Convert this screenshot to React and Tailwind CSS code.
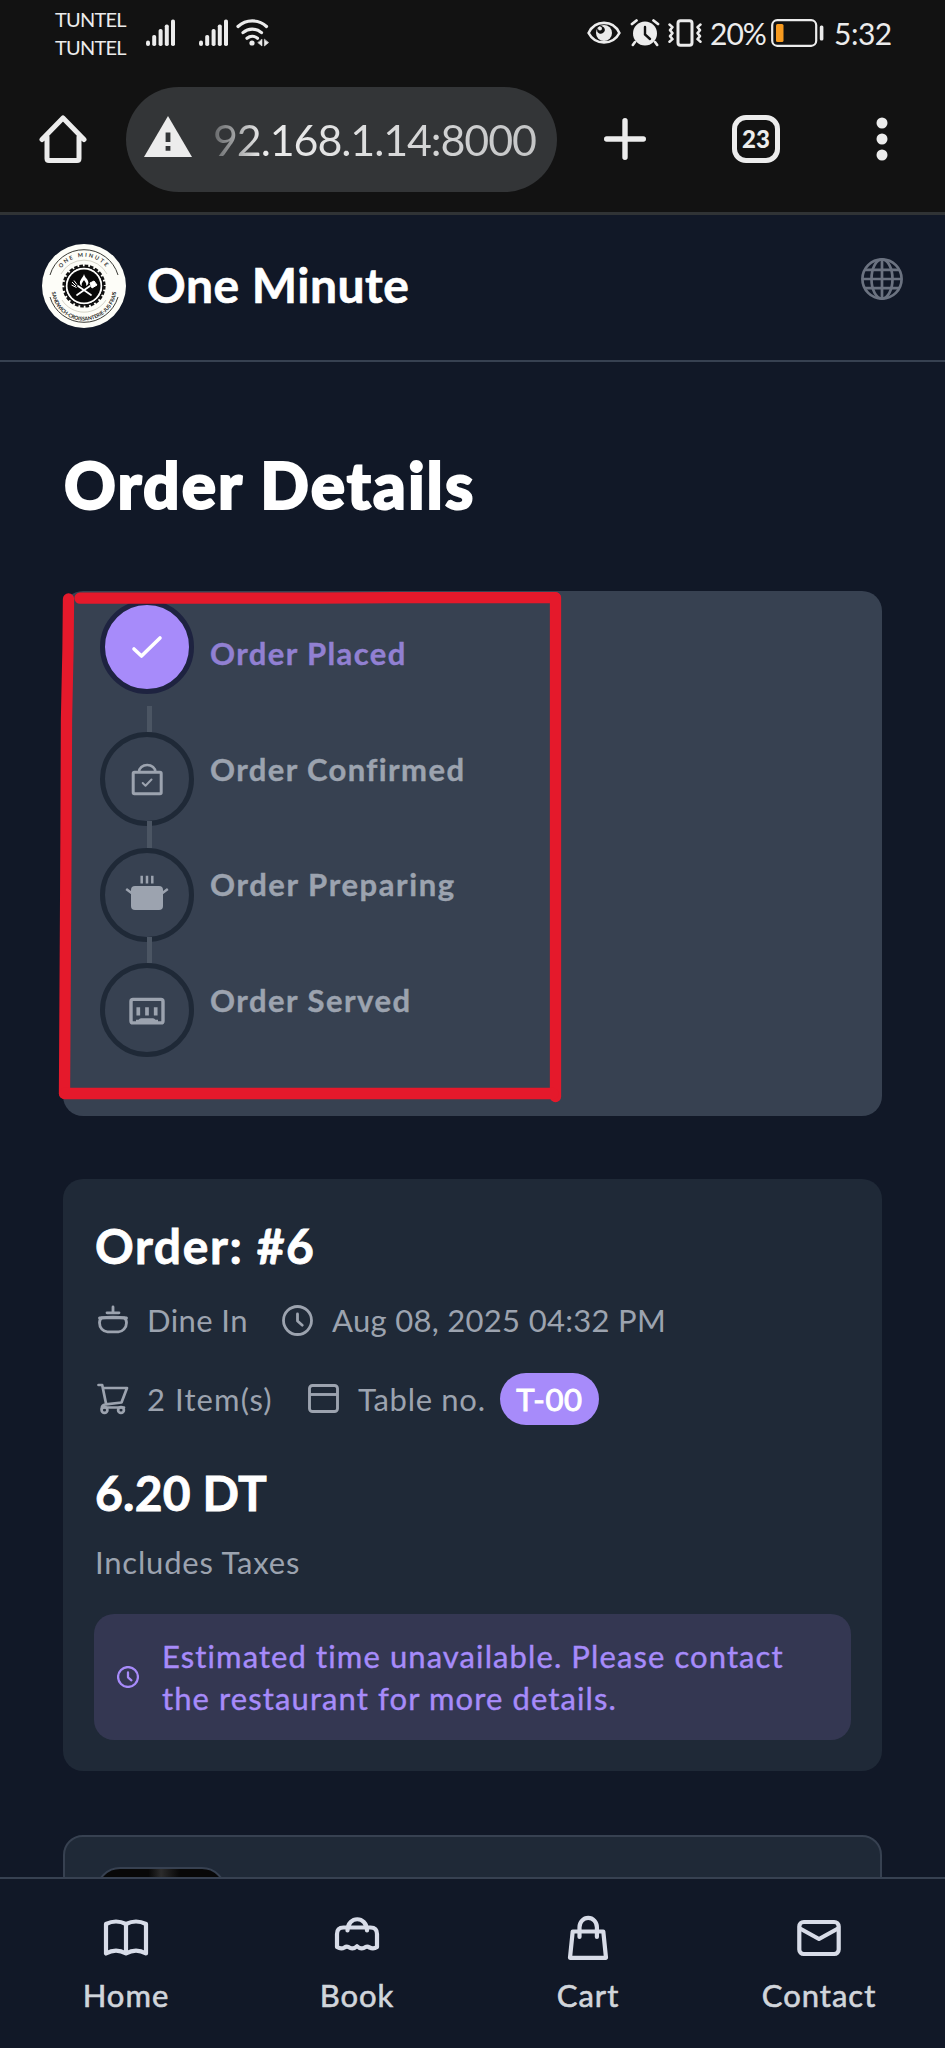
import React from "react";

function Signal() {
  return (
    <svg width="30" height="28" viewBox="0 0 30 28" fill="#ececec">
      <rect x="0" y="21.5" width="4" height="5.5" rx="2" />
      <rect x="6.2" y="16" width="4" height="11" rx="1.8" />
      <rect x="12.6" y="10" width="4" height="17" rx="1.8" />
      <rect x="18.8" y="5.5" width="4" height="21.5" rx="1.8" />
      <rect x="25" y="0.5" width="4" height="26.5" rx="1.8" />
    </svg>
  );
}

function Wifi() {
  return (
    <svg width="34" height="28" viewBox="0 0 34 28" fill="none" stroke="#ececec" strokeWidth="3.2" strokeLinecap="round">
      <path d="M2 7.5a21 21 0 0 1 28.5 0M7 13.6a14 14 0 0 1 18.5 0M11 19.2a8.5 8.5 0 0 1 10.5 0" />
      <circle cx="16" cy="24" r="2.6" fill="#ececec" stroke="none" />
      <path d="M26 20.5v6.5l-4-3.2zM28.4 20.5v6.5l4-3.2z" fill="#ececec" stroke="#ececec" strokeWidth="0.6" />
    </svg>
  );
}

function Eye() {
  return (
    <svg width="34" height="26" viewBox="0 0 34 26" fill="none">
      <path d="M1.6 13C8 -0.5 26 -0.5 32.4 13C26 25.5 8 25.5 1.6 13Z" stroke="#ececec" strokeWidth="2.6" />
      <circle cx="17" cy="13" r="8" fill="#ececec" />
      <path d="M10 9.5a3.8 3.8 0 0 0 6 3.5a4 4 0 0 0 1-5.5l-3-2z" fill="#121212" />
      <circle cx="13" cy="8.5" r="2" fill="#ececec" />
    </svg>
  );
}

function Alarm() {
  return (
    <svg width="30" height="28" viewBox="0 0 30 28" fill="none" strokeLinecap="round">
      <circle cx="15" cy="14.5" r="12" fill="#ececec" />
      <path d="M2 5L6.5 1.5M28 5l-4.5-3.5" stroke="#ececec" strokeWidth="2.8" />
      <path d="M5 23l-2.2 3M25 23l2.2 3" stroke="#ececec" strokeWidth="2.6" />
      <path d="M15 8v7.5l5 4.5" stroke="#121212" strokeWidth="2.4" />
    </svg>
  );
}

function Vibrate() {
  return (
    <svg width="34" height="28" viewBox="0 0 34 28" fill="none" stroke="#ececec" strokeLinecap="round" strokeLinejoin="round">
      <rect x="10" y="1.7" width="14" height="24.6" rx="2.5" strokeWidth="3" />
      <path d="M1.5 5.5l3 2.6-2.5 3 2.5 3-2.5 3 2.5 3-3 2.6M32.5 5.5l-3 2.6 2.5 3-2.5 3 2.5 3-2.5 3 3 2.6" strokeWidth="2.5" />
    </svg>
  );
}

function Battery() {
  return (
    <svg width="54" height="28" viewBox="0 0 54 28" fill="none">
      <rect x="1.2" y="1.2" width="44" height="25.6" rx="5" stroke="#ececec" strokeWidth="2.2" />
      <rect x="5" y="5" width="7.5" height="18" rx="1.5" fill="#f79a1f" />
      <rect x="48.8" y="6.5" width="3.6" height="15" rx="1.5" fill="#ececec" />
    </svg>
  );
}

function StatusBar() {
  return (
    <div className="flex h-[66px] items-center pl-[55px] text-[#ececec]">
      <div className="w-[91px] whitespace-nowrap text-[20px] leading-[28px] tracking-[-0.8px]">
        <div>TUNTEL</div>
        <div>TUNTEL</div>
      </div>
      <div className="w-[53px]"><Signal /></div>
      <div className="w-[37px]"><Signal /></div>
      <div className="w-[351px]"><Wifi /></div>
      <div className="w-[43px]"><Eye /></div>
      <div className="w-[38px]"><Alarm /></div>
      <div className="w-[42px]"><Vibrate /></div>
      <div className="w-[61px] whitespace-nowrap text-[30px] leading-[40px] tracking-[-1px]">20%</div>
      <div className="w-[63px]"><Battery /></div>
      <div className="whitespace-nowrap text-[30px] leading-[40px] tracking-[-0.5px]">5:32</div>
    </div>
  );
}

function BrowserBar() {
  return (
    <div className="flex h-[146px] items-center pl-[39px]">
      <svg className="mr-[39px]" width="48" height="50" viewBox="0 0 48 50" fill="none" stroke="#ececec" strokeWidth="5" strokeLinejoin="round" strokeLinecap="round">
        <path d="M3 25.5L24 4l21 21.5M8 23v21.5q0 2 2 2h28q2 0 2-2V23" />
      </svg>
      <div className="flex h-[105px] w-[431px] items-center rounded-full bg-[#333537] pl-[18px]">
        <svg className="mb-[6px] mr-[21px]" width="48" height="42" viewBox="0 0 48 42">
          <path d="M24 1L48 42H0Z" fill="#ececec" />
          <path d="M21.6 17.5h4.8v9.5h-4.8zM21.6 31h4.8v4.8h-4.8z" fill="#333537" />
        </svg>
        <span className="whitespace-nowrap bg-linear-to-r from-[#66686a] via-[#ececec] via-15% to-[#c4c5c6] bg-clip-text pt-[1px] text-[43px] leading-[60px] tracking-[-1.1px] text-transparent">
          92.168.1.14:8000
        </span>
      </div>
      <svg className="ml-[47px]" width="42" height="42" viewBox="0 0 42 42" stroke="#ececec" strokeWidth="5.4" strokeLinecap="round">
        <path d="M21 2.7v36.6M2.7 21h36.6" />
      </svg>
      <div className="ml-[86px] flex size-[48px] items-center justify-center rounded-[14px] border-[5px] border-[#ececec] text-[24px] font-black leading-none text-[#ececec]">
        23
      </div>
      <svg className="ml-[96px]" width="12" height="44" viewBox="0 0 12 44" fill="#ececec">
        <circle cx="6" cy="6" r="5.5" />
        <circle cx="6" cy="22" r="5.5" />
        <circle cx="6" cy="38" r="5.5" />
      </svg>
    </div>
  );
}

function Logo() {
  return (
    <svg width="84" height="84" viewBox="0 0 84 84" fill="none">
      <defs>
        <path id="arcTop" d="M14 36A28.5 28.5 0 0 1 70 36" />
        <path id="arcBottom" d="M9.5 44A32.5 32.5 0 0 0 74.5 44" />
      </defs>
      <circle cx="42" cy="42" r="42" fill="#fdfdf8" />
      <path d="M8 31A35.5 35.5 0 0 1 76 31M8 53A35.5 35.5 0 0 0 76 53" stroke="#3a3a35" strokeWidth="1" />
      <path d="M19 30A26 26 0 0 1 65 30M20 56A26 26 0 0 0 64 56" stroke="#b9b7a8" strokeWidth="0.6" />
      <circle cx="42" cy="42" r="20.3" stroke="#111" strokeWidth="2.6" strokeDasharray="3.6 1.715" />
      <circle cx="42" cy="42" r="19" stroke="#111" strokeWidth="1.6" />
      <circle cx="42" cy="42" r="17.5" stroke="#fff" strokeWidth="1.2" />
      <circle cx="42" cy="42" r="16.5" fill="#080808" />
      <path d="M42 30c-1 4-5 6-4 10 1 2 2 2 2 2-1-3 1-4 2-6 1 2 3 3 2 6 2-1 3-3 2-5-1-3-3-3-4-7z" fill="#fff" />
      <path d="M35 51l13-9M49 51l-13-9" stroke="#fff" strokeWidth="1.7" strokeLinecap="round" />
      <path d="M48 39l4-2 3 4-5 3zM30 38l4 4M32 36.5l3 4M29.5 41l5 2.5" fill="#fff" stroke="#fff" strokeWidth="1" />
      <text fontSize="5.5" fontWeight="700" fill="#333" letterSpacing="1.8">
        <textPath href="#arcTop" startOffset="50%" textAnchor="middle">ONE MINUTE</textPath>
      </text>
      <text fontSize="5.2" fontWeight="700" fill="#222" textLength="94">
        <textPath href="#arcBottom" startOffset="4%" textLength="94">SANDWICH-CROISSANTERIE-JUS FRAIS</textPath>
      </text>
    </svg>
  );
}

function Globe() {
  return (
    <svg width="42" height="42" viewBox="0 0 42 42" fill="none" stroke="#6b7280" strokeWidth="2.7">
      <circle cx="21" cy="21" r="19.6" />
      <ellipse cx="21" cy="21" rx="10.5" ry="19.6" />
      <path d="M21 1.5v39M1.5 21h39M4 11.8h34M4 30.2h34" />
    </svg>
  );
}

function AppHeader() {
  return (
    <header className="flex h-[147px] items-start justify-between border-b-2 border-[#374151] pl-[42px] pr-[42px] pt-[29px]">
      <div className="flex items-center">
        <Logo />
        <span className="ml-[21px] whitespace-nowrap pb-[2px] text-[48px] font-bold leading-[60px] tracking-[0.5px] [-webkit-text-stroke:0.6px]">One Minute</span>
      </div>
      <div className="pt-[14px]"><Globe /></div>
    </header>
  );
}

const stepIcons = {
  check: (
    <svg width="48" height="48" viewBox="0 0 48 48" fill="none" stroke="#fff" strokeWidth="3.6" strokeLinecap="round" strokeLinejoin="round">
      <path d="M11 26l7.5 7L37 15" />
    </svg>
  ),
  bag: (
    <svg width="48" height="48" viewBox="0 0 48 48" fill="none" stroke="#9ca3af" strokeWidth="3" strokeLinejoin="round">
      <rect x="10.2" y="17.2" width="28" height="21.5" rx="1.2" />
      <path d="M16 17a8.2 7 0 0 1 16.4 0" strokeWidth="2.6" />
      <path d="M19.7 28l2.8 2.7L28.5 24.5" strokeWidth="2" strokeLinecap="round" />
    </svg>
  ),
  pot: (
    <svg width="48" height="48" viewBox="0 0 48 48" fill="none" stroke="#9ca3af" strokeWidth="2.5">
      <rect x="8" y="15" width="32" height="24" rx="4" fill="#9ca3af" stroke="none" />
      <path d="M18.7 4.7v7.8M24 4.7v7.8M29.3 4.7v7.8M3.2 18l6 4.5M44.8 18l-6 4.5" />
    </svg>
  ),
  served: (
    <svg width="48" height="48" viewBox="0 0 48 48" fill="none" stroke="#9ca3af" strokeWidth="3.4">
      <rect x="8" y="13.4" width="32" height="23.5" rx="2" />
      <path d="M15.3 21.2v8.3M24 21.2v8.3M32.7 21.2v8.3" strokeWidth="3.7" />
      <path d="M13 33.8h2.5q1-1.5 2.5-1.5h12q1.5 0 2.5 1.5H35V36H13z" fill="#9ca3af" stroke="none" />
    </svg>
  ),
};

function Step({ icon, label, row, labelClass, circle, children }) {
  return (
    <div className={"flex items-start " + row}>
      <div className="flex w-[94px] flex-col items-center">
        <div className={"flex size-[94px] shrink-0 items-center justify-center rounded-full border-[5px] " + circle}>
          {stepIcons[icon]}
        </div>
        {children}
      </div>
      <div className={"ml-[16px] whitespace-nowrap text-[31px] font-bold leading-[40px] [-webkit-text-stroke:0.4px] " + labelClass}>{label}</div>
    </div>
  );
}

function Tracker() {
  return (
    <section className="relative h-[525px] rounded-[20px] bg-[#374151] pl-[37px] pt-[9px]">
      <Step icon="check" label="Order Placed" row="h-[132px]" circle="border-[#1e2340] bg-[#a78bfa]" labelClass="pt-[33px] tracking-[1.4px] text-[#9180d2]">
        <div className="ml-[5px] mt-[12px] h-[26px] w-[5px] bg-[#4b5563]" />
      </Step>
      <Step icon="bag" label="Order Confirmed" row="h-[116px]" circle="border-[#1f2937]" labelClass="pt-[17px] tracking-[1.4px] text-[#9ca3af]">
        <div className="z-10 -mt-[5px] ml-[5px] h-[27px] w-[5px] bg-[#4b5563]" />
      </Step>
      <Step icon="pot" label="Order Preparing" row="h-[115px]" circle="border-[#1f2937]" labelClass="pt-[16px] tracking-[1.6px] text-[#9ca3af]">
        <div className="z-10 -mt-[5px] ml-[5px] h-[26px] w-[5px] bg-[#4b5563]" />
      </Step>
      <Step icon="served" label="Order Served" row="h-[100px]" circle="border-[#1f2937]" labelClass="pt-[17px] tracking-[1.5px] text-[#9ca3af]" />

      <svg className="absolute -left-[8px] -top-[2px]" width="520" height="520" viewBox="0 0 520 520" fill="none" stroke="#e5192b" strokeWidth="11.3" strokeLinecap="round" strokeLinejoin="round">
        <path d="M13.5 10L13 60L11.5 130L11 250L10 420L9.5 504" />
        <path d="M25 9.2L260 9.2L340 8.7H500" />
        <path d="M500.5 8.7V507.5" />
        <path d="M9.5 504.5H498" />
      </svg>
    </section>
  );
}

function Clock({ size, stroke, color }) {
  return (
    <svg width={size} height={size} viewBox="0 0 31 31" fill="none" stroke={color} strokeWidth={stroke} strokeLinecap="round" strokeLinejoin="round">
      <circle cx="15.5" cy="15.5" r="14" />
      <path d="M15.5 9v7l4.8 4.2" />
    </svg>
  );
}

function OrderCard() {
  return (
    <section className="mt-[63px] h-[592px] rounded-[20px] bg-[#1f2937] px-[31px] pt-[39px]">
      <h2 className="whitespace-nowrap pl-[1px] text-[48px] font-bold leading-[56px] tracking-[1.6px] [-webkit-text-stroke:0.8px]">Order: #6</h2>
      <div className="mt-[26px] flex h-[40px] items-center whitespace-nowrap text-[31px] text-[#9ca3af]">
        <svg className="ml-[3px]" width="32" height="30" viewBox="0 0 32 30" fill="none" stroke="#9ca3af" strokeWidth="2.8" strokeLinecap="round">
          <path d="M16 2v5.5M10 7.8h12M2.5 13q13.5-1.5 27 0" />
          <path d="M5 12.8h22q2.5 1.5 2.5 5c0 5-4 9-8 9h-11c-4.5 0-8-4-8-9q0-3.5 2.5-5z" />
        </svg>
        <span className="ml-[18px] w-[135px] tracking-[0.4px]">Dine In</span>
        <Clock size="31" stroke="2.8" color="#9ca3af" />
        <span className="ml-[19px] tracking-[0.3px]">Aug 08, 2025 04:32 PM</span>
      </div>
      <div className="mt-[33px] flex h-[52px] items-center whitespace-nowrap text-[31px] text-[#9ca3af]">
        <svg className="ml-[3px]" width="32" height="32" viewBox="0 0 32 32" fill="none" stroke="#9ca3af" strokeWidth="2.7" strokeLinecap="round" strokeLinejoin="round">
          <path d="M1.5 2h3.7l4 19.5M6 5h24l-5.5 14.5-15.5 1.8M8.5 21.5q-4 .5-3.7 4.5M7 24.5h20" />
          <circle cx="7.5" cy="27" r="2.9" />
          <circle cx="24" cy="27" r="2.9" />
        </svg>
        <span className="ml-[18px] w-[161px] tracking-[1.1px]">2 Item(s)</span>
        <svg width="31" height="30" viewBox="0 0 31 30" fill="none" stroke="#9ca3af" strokeWidth="2.9">
          <rect x="1.5" y="1.5" width="28" height="26" rx="3" />
          <path d="M1.5 10.5h28" />
        </svg>
        <span className="ml-[19px] w-[142px] tracking-[0.7px]">Table no.</span>
        <span className="flex h-[52px] w-[99px] items-center justify-center rounded-full bg-[#a78bfa] tracking-[0.6px] text-white [-webkit-text-stroke:1px]">T-00</span>
      </div>
      <div className="mt-[40px] whitespace-nowrap pl-[1px] text-[48px] font-bold leading-[56px] tracking-[0.2px] [-webkit-text-stroke:0.8px]">6.20 DT</div>
      <div className="mt-[21px] whitespace-nowrap pl-[1px] text-[31px] leading-[40px] tracking-[0.8px] text-[#9ca3af]">Includes Taxes</div>
      <div className="mt-[32px] flex h-[126px] items-center rounded-[20px] bg-[#343752] pl-[23px] text-[#a78bfa]">
        <Clock size="22" stroke="3.2" color="#a78bfa" />
        <p className="ml-[23px] whitespace-nowrap text-[31px] leading-[42px] tracking-[1.1px] [-webkit-text-stroke:0.4px]">
          Estimated time unavailable. Please contact
          <br />
          the restaurant for more details.
        </p>
      </div>
    </section>
  );
}

function ItemCard() {
  return (
    <section className="mt-[64px] h-[200px] rounded-[20px] border-2 border-[#374151] bg-[#1f2937] pl-[31px] pt-[30px]">
      <div className="h-[126px] w-[130px] rounded-[24px] border-2 border-[#374151] bg-linear-to-r from-[#080808] from-40% via-[#2c2c2c] to-[#080808] to-65%" />
    </section>
  );
}

const tabs = [
  {
    label: "Home",
    art: <path d="M4 10Q14 5 24 10Q34 5 44 10V39.5Q34 33.8 24 39.5Q14 33.8 4 39.5ZM24 10V39" />,
  },
  {
    label: "Book",
    art: (
      <path d="M14.5 16.5C15 1.5 33.5 1.5 34 16.5M10.5 13.5H37.5Q44 13.5 44 20V33Q40.5 35.5 36.5 33.5Q34 31.5 31 33.8Q27.5 35.5 24 32.3Q20.5 35.5 17 33.8Q14 31.5 11.5 33.5Q8 35.5 4 33V20Q4 13.5 10.5 13.5Z" />
    ),
  },
  {
    label: "Cart",
    art: <path d="M8.7 17.5H39.3L42 43.8H6ZM15.5 23V13.2a8.7 9.3 0 0 1 17.4 0V23" />,
  },
  {
    label: "Contact",
    art: (
      <>
        <rect x="4.3" y="8" width="39.4" height="32" rx="4.5" />
        <path d="M5 14.5L24 25L43 14.5" />
      </>
    ),
  },
];

function TabBar() {
  return (
    <nav className="flex h-[171px] shrink-0 justify-center border-t-2 border-[#374151] pt-[35px] text-[#d1d5db]">
      {tabs.map((t) => (
        <div key={t.label} className="flex w-[231px] flex-col items-center">
          <svg width="48" height="48" viewBox="0 0 48 48" fill="none" stroke="#d8dce8" strokeWidth="4.2" strokeLinecap="round" strokeLinejoin="round">
            {t.art}
          </svg>
          <span className="mt-[13px] whitespace-nowrap text-[31px] leading-[40px] tracking-[1px] [-webkit-text-stroke:0.6px]">{t.label}</span>
        </div>
      ))}
    </nav>
  );
}

export default function App() {
  return (
    <div className="flex h-[2048px] w-[945px] flex-col overflow-hidden bg-[#111827] font-['Lato','Open_Sans',sans-serif] text-white">
      <div className="h-[215px] shrink-0 border-b-[3px] border-[#303335] bg-[#121212]">
        <StatusBar />
        <BrowserBar />
      </div>
      <div className="shrink-0"><AppHeader /></div>
      <main className="min-h-0 flex-1 overflow-hidden px-[63px] pt-[83px]">
        <h1 className="mb-[66px] whitespace-nowrap pl-[1px] text-[64px] font-black leading-[80px] tracking-[2.1px] [-webkit-text-stroke:2px]">Order Details</h1>
        <Tracker />
        <OrderCard />
        <ItemCard />
      </main>
      <TabBar />
    </div>
  );
}
